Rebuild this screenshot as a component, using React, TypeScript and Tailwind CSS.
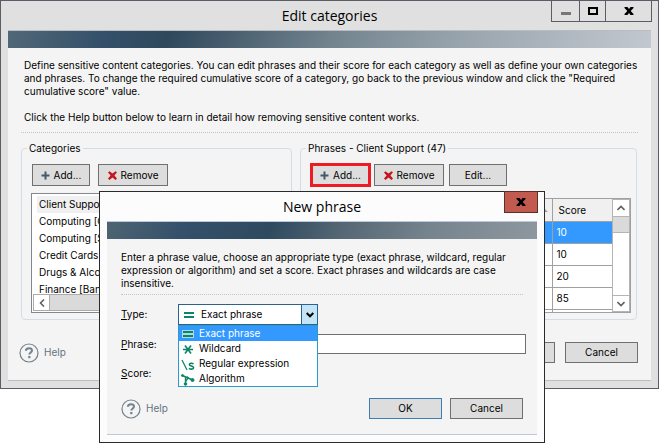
import React from "react";

const categories = [
  "Client Support",
  "Computing [C",
  "Computing [S",
  "Credit Cards",
  "Drugs & Alco",
  "Finance [Ban",
];

const scores = [10, 10, 20, 85];

const types = [
  { label: "Exact phrase", icon: "equals" },
  { label: "Wildcard", icon: "star" },
  { label: "Regular expression", icon: "regex" },
  { label: "Algorithm", icon: "graph" },
];

const PlusIcon: React.FC = () => (
  <svg width="9" height="9" viewBox="0 0 9 9" aria-hidden="true">
    <path d="M3.5 0.5h2v3h3v2h-3v3h-2v-3h-3v-2h3z" fill="#43586a" />
  </svg>
);

const CrossIcon: React.FC = () => (
  <svg width="9" height="9" viewBox="0 0 9 9" aria-hidden="true">
    <path
      d="M0 1.5L1.5 0.2L4.5 2.6L7.5 0.2L9 1.2L6.4 4.5L9 7.6L7.5 9L4.5 6.4L1.5 9L0 7.6L2.6 4.5z"
      fill="#c5161d"
    />
  </svg>
);

const CloseIcon: React.FC = () => (
  <svg width="10" height="8" viewBox="0 0 10 8" aria-hidden="true">
    <path
      d="M0.5 0h3L5 2.1L6.5 0h3v1L6.7 4L9.5 7v1h-3L5 5.9L3.5 8h-3V7L3.3 4L0.5 1z"
      fill="#000"
    />
  </svg>
);

const HelpLink: React.FC = () => (
  <a href="#help" className="flex items-center gap-[5px] text-[#65737e]">
    <svg width="20" height="20" viewBox="0 0 20 20" fill="none" aria-hidden="true">
      <circle cx="10" cy="10" r="9" stroke="#74828c" strokeWidth="1.2" />
      <path
        d="M6.9 7.8C6.9 5.8 8.2 5.2 10 5.2s3 1 3 2.4c0 1.9-2.7 1.9-2.7 4"
        stroke="#74828c"
        strokeWidth="2"
      />
      <path d="M9.2 13h2.2v2.2h-2.2z" fill="#74828c" />
    </svg>
    Help
  </a>
);

const TypeIcon: React.FC<{ name: string; selected?: boolean }> = ({
  name,
  selected,
}) => (
  <svg width="14" height="14" viewBox="0 0 14 14" aria-hidden="true">
    {name === "equals" && selected && (
      <path d="M1 3h12v4h-12zM1 7h12v4h-12z" fill="#a9dcdf" />
    )}
    {name === "equals" && (
      <path d="M2 4h10v2h-10zM2 8h10v2h-10z" fill="#0b8468" />
    )}
    {name === "star" && (
      <path
        d="M2 7.5h10M4 3.5l6 8M10 3.5l-6 8"
        stroke="#0b8468"
        strokeWidth="1.6"
      />
    )}
    {name === "regex" && (
      <g fill="none" stroke="#0b8468">
        <path d="M1 3l5 10" strokeWidth="1.3" />
        <path
          d="M12.5 6.8C11.5 6 8.4 5.8 8.4 7.5c0 2 4.2 1.2 4.2 3.2 0 1.9-3.4 1.6-4.6.7"
          strokeWidth="1.6"
        />
      </g>
    )}
    {name === "graph" && (
      <g fill="#0b8468" stroke="#0b8468" strokeWidth="1">
        <path d="M1.5 3.5L11.5 8M4.5 12V5M4.5 10L7 6" fill="none" strokeWidth="1.4" />
        <circle cx="1.5" cy="3.5" r="1" />
        <circle cx="11.5" cy="8" r="1.5" />
        <circle cx="4.5" cy="12" r="1.3" />
        <circle cx="6.5" cy="5.5" r="0.7" />
      </g>
    )}
  </svg>
);

const Chevron: React.FC<{ d: string }> = ({ d }) => (
  <svg width="8" height="8" viewBox="0 0 8 8" fill="none" aria-hidden="true">
    <path d={d} stroke="#606060" strokeWidth="1.6" />
  </svg>
);

const btn =
  "flex items-center justify-center gap-1 border border-[#707070] bg-[#dddddd]";

const CategoriesPanel: React.FC = () => (
  <fieldset className="w-[271px] h-[180px] shrink-0 rounded-sm border border-[#d3dde6] px-[9px]">
    <legend className="-ml-1 px-0.5 leading-4">Categories</legend>
    <div className="flex gap-2 pt-2 px-px">
      <button className={`${btn} w-[58px] h-[22px]`}>
        <PlusIcon />
        Add...
      </button>
      <button className={`${btn} w-[70px] h-[22px]`}>
        <CrossIcon />
        Remove
      </button>
    </div>
    <div className="mt-[7px] h-[120px] border border-[#828790] bg-white p-px">
      <ul className="h-[99px] pt-px">
        {categories.map((name, i) => (
          <li
            key={name}
            className={`ml-1 px-0.5 leading-[17px] ${i === 0 ? "bg-[#f0f0f0]" : ""}`}
          >
            {name}
          </li>
        ))}
      </ul>
      <div className="relative flex h-[17px] border border-[#ababab] bg-[#dadada]">
        <button
          aria-label="Scroll left"
          className="flex w-4 items-center justify-center border-r border-[#ababab] bg-white"
        >
          <Chevron d="M6 0.5L2.5 4L6 7.5" />
        </button>
      </div>
    </div>
  </fieldset>
);

const PhrasesPanel: React.FC = () => (
  <fieldset className="flex-1 h-[180px] rounded-sm border border-[#d3dde6] pl-[9px] pr-1">
    <legend className="-ml-1 px-0.5 leading-4">Phrases - Client Support (47)</legend>
    <div className="flex gap-[3px] pt-[7px]">
      <button className="flex h-6 w-[61px] items-center justify-center gap-1 border-3 border-[#ed1c24] bg-[#dddddd]">
        <PlusIcon />
        Add...
      </button>
      <div className="flex items-center gap-[5px]">
        <button className={`${btn} w-[70px] h-[22px]`}>
          <CrossIcon />
          Remove
        </button>
        <button className={`${btn} w-[58px] h-[22px]`}>Edit...</button>
      </div>
    </div>
    <div className="mt-[11px] mr-px flex h-[115px] border border-[#a0a0a0] bg-white overflow-hidden">
      <table className="flex-1 table-fixed border-collapse self-start">
        <thead>
          <tr className="h-[22px] bg-[#f0f0f0] text-left">
            <th className="border-r border-b border-[#a0a0a0] pr-1 font-normal">
              <svg className="ml-auto" width="5" height="5" viewBox="0 0 5 5" aria-hidden="true">
                <path d="M0 0l5 5H0z" fill="#a0a0a0" />
              </svg>
            </th>
            <th className="w-[60px] border-b border-[#a0a0a0] px-1.5 pt-0.5 font-normal">
              Score
            </th>
          </tr>
        </thead>
        <tbody>
          {scores.map((score, i) => (
            <tr
              key={i}
              className={`h-[22px] ${i === 0 ? "bg-[#3399ff] text-white" : ""}`}
            >
              <td className="border-r border-b border-[#a0a0a0]" />
              <td className="border-b border-[#a0a0a0] px-1">{score}</td>
            </tr>
          ))}
          <tr className="h-2">
            <td className="border-r border-[#a0a0a0]" />
            <td />
          </tr>
        </tbody>
      </table>
      <div className="flex w-[18px] flex-col border border-[#b4b4b4] bg-white">
        <button aria-label="Scroll up" className="flex h-4 items-center justify-center">
          <Chevron d="M0.5 6L4 2.5L7.5 6" />
        </button>
        <div className="h-[17px] border-y border-[#b4b4b4] bg-[#dadada]" />
        <button
          aria-label="Scroll down"
          className="mt-auto flex h-4 items-center justify-center border-t border-[#b4b4b4]"
        >
          <Chevron d="M0.5 2L4 5.5L7.5 2" />
        </button>
      </div>
    </div>
  </fieldset>
);

const TypeSelect: React.FC = () => (
  <div className="relative w-[140px]">
    <select
      id="type"
      className="block h-[21px] w-full appearance-none border border-[#2c628b] bg-white pl-[22px]"
    >
      {types.map((t) => (
        <option key={t.label}>{t.label}</option>
      ))}
    </select>
    <span className="pointer-events-none absolute left-1 top-1">
      <TypeIcon name="equals" />
    </span>
    <span className="pointer-events-none absolute right-0 top-0 flex h-[21px] w-[17px] items-center justify-center border border-[#2c628b] bg-[#c4e5f6]">
      <svg width="8" height="6" viewBox="0 0 8 6" fill="none" aria-hidden="true">
        <path d="M0.7 1L4 4.3L7.3 1" stroke="#000" strokeWidth="2" />
      </svg>
    </span>
    <ul
      role="listbox"
      aria-label="Type"
      className="absolute left-0 top-[21px] z-10 w-full border border-[#2a9bcb] bg-white"
    >
      {types.map((t, i) => (
        <li
          key={t.label}
          role="option"
          aria-selected={i === 0}
          className={`flex h-[15px] items-center gap-1 px-0.5 ${
            i === 0 ? "bg-[#3399ff] text-white" : ""
          }`}
        >
          <TypeIcon name={t.icon} selected={i === 0} />
          {t.label}
        </li>
      ))}
    </ul>
  </div>
);

const NewPhraseDialog: React.FC = () => (
  <div
    role="dialog"
    aria-label="New phrase"
    className="absolute left-[99px] right-[114px] top-[191px] border border-[#2b2b2b] bg-[#fcfcfc] px-[7px] pb-[7px]"
  >
    <header className="relative flex h-[29px] items-center justify-center">
      <h2 className="font-['Open_Sans',sans-serif] text-[14px]">New phrase</h2>
      <button
        aria-label="Close dialog"
        className="absolute -top-px right-[-1px] flex h-[22px] w-[34px] items-center justify-center border border-[#5b2f2b] bg-[#c35a50]"
      >
        <CloseIcon />
      </button>
    </header>
    <div className="border-y border-[#bdc8dc] bg-[#f4f4f4]">
      <div className="h-[17px] bg-[linear-gradient(110deg,#4e6472,#34506a_18%,#2f4a5f_38%,#566875_55%,#76848e_75%,#8e979f)]" />
      <div className="px-3.5 pt-3 pb-[15px]">
        <p className="border-b border-dotted border-[#c4c4c4] pb-1 leading-[13px]">
          Enter a phrase value, choose an appropriate type (exact phrase, wildcard, regular
          expression or algorithm) and set a score. Exact phrases and wildcards are case
          insensitive.
        </p>
        <div className="mt-[9px] flex items-center">
          <label htmlFor="type" className="w-[57px]">
            <u>T</u>ype:
          </label>
          <TypeSelect />
        </div>
        <div className="-mr-[3px] mt-[9px] flex items-center">
          <label htmlFor="phrase" className="w-[57px]">
            <u>P</u>hrase:
          </label>
          <input id="phrase" className="h-5 min-w-0 flex-1 border border-[#707070] bg-white px-1" />
        </div>
        <div className="mt-[9px] flex h-5 items-center">
          <label htmlFor="score" className="w-[57px]">
            <u>S</u>core:
          </label>
          <input id="score" className="h-4 w-10 bg-transparent" />
        </div>
        <div className="mt-[15px] flex items-center justify-between">
          <HelpLink />
          <div className="flex gap-2">
            <button className="h-[21px] w-[73px] border border-[#3c7fb1] bg-[#dddddd]">OK</button>
            <button className="h-[21px] w-[73px] border border-[#707070] bg-[#dddddd]">Cancel</button>
          </div>
        </div>
      </div>
    </div>
  </div>
);

const App: React.FC = () => {
  return (
    <main className="relative min-h-screen bg-white font-[Inter,sans-serif] text-[10px] text-black">
      <div className="border border-[#5c5c66] bg-[#e0e0e0] px-[7px] pb-[7px]">
        <header className="relative flex h-[29px] items-center justify-center">
          <h1 className="font-['Open_Sans',sans-serif] text-[14px]">Edit categories</h1>
          <div className="absolute -top-px right-[-1px] flex h-[22px] divide-x divide-[#5c5c66] border border-[#5c5c66]">
            <button aria-label="Minimize" className="flex w-7 items-center justify-center">
              <span className="mt-1 h-[3px] w-2.5 bg-[#777777]" />
            </button>
            <button aria-label="Maximize" className="flex w-[26px] items-center justify-center">
              <span className="h-2 w-2.5 border-2 border-black" />
            </button>
            <button aria-label="Close" className="flex w-[45px] items-center justify-center">
              <CloseIcon />
            </button>
          </div>
        </header>
        <div className="border-y border-[#b9bcc0] bg-[#f4f4f4]">
          <div className="h-[17px] bg-[linear-gradient(110deg,#516877,#34506a_15%,#2f485c_25%,#72838e_50%,#98a4ad_70%,#c3c8d0)]" />
          <div className="px-[13px] pt-[11px] pb-[17px]">
            <div className="border-b border-dotted border-[#c4c4c4] pb-2 pl-[3px] leading-[13px]">
              <p>
                Define sensitive content categories. You can edit phrases and their score for each
                category as well as define your own categories and phrases. To change the required
                cumulative score of a category, go back to the previous window and click the
                "Required cumulative score" value.
              </p>
              <p className="mt-[13px]">
                Click the Help button below to learn in detail how removing sensitive content works.
              </p>
            </div>
            <div className="mt-[7px] flex gap-2 pr-px">
              <CategoriesPanel />
              <PhrasesPanel />
            </div>
            <div className="-ml-0.5 mt-[22px] flex items-center justify-between">
              <HelpLink />
              <div className="flex gap-2.5">
                <button aria-label="OK" className={`${btn} h-[21px] w-[73px]`} />
                <button className={`${btn} h-[21px] w-[73px]`}>Cancel</button>
              </div>
            </div>
          </div>
        </div>
      </div>
      <NewPhraseDialog />
    </main>
  );
};

export default App;
